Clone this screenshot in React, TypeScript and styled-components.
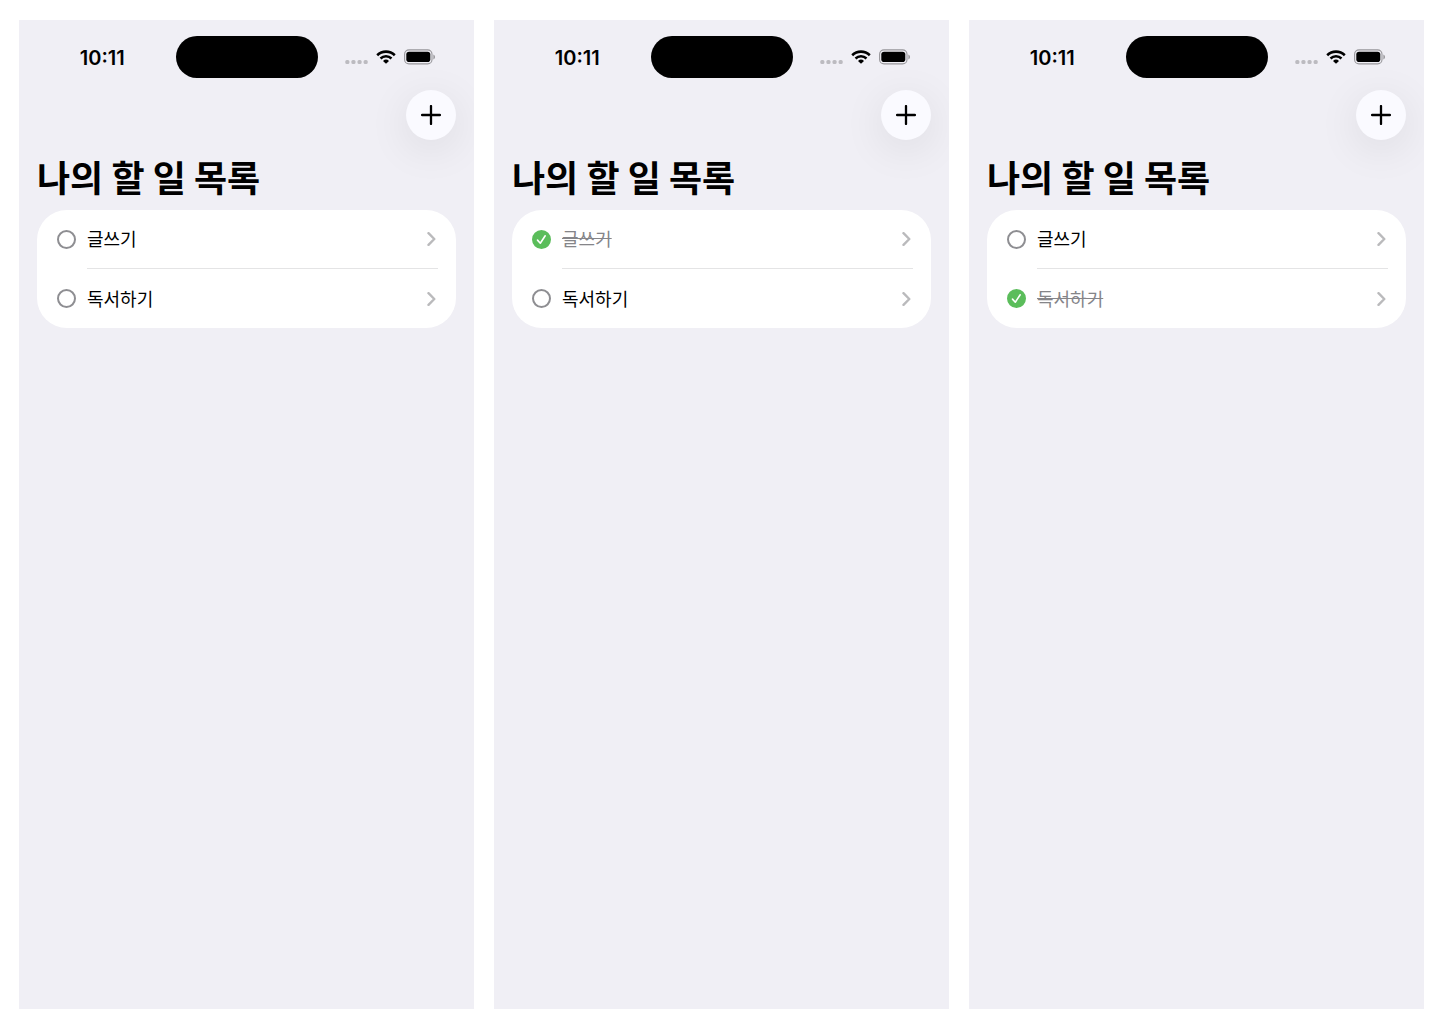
import React, { useId, useState } from "react";
import styled, { createGlobalStyle } from "styled-components";

const GlobalStyle = createGlobalStyle`
  *, *::before, *::after { box-sizing: border-box; }
  body {
    margin: 0;
    background: #fff;
    color: #000;
    font-family: Inter, "Noto Sans CJK KR", sans-serif;
  }
`;

const Gallery = styled.main`
  display: grid;
  grid-template-columns: repeat(3, minmax(0, 1fr));
  gap: 20px;
  min-height: 100vh;
  padding: 20px 22px 21px 19px;
`;

const Phone = styled.section`
  display: flex;
  flex-direction: column;
  overflow: hidden;
  padding: 16px 18px;
  background: #f0eff5;
`;

const StatusBar = styled.div`
  display: grid;
  grid-template-columns: 1fr 142px 1fr;
  align-items: center;
`;

const Clock = styled.time`
  justify-self: center;
  padding: 2px 8px 0 0;
  font-size: 20px;
  font-weight: 600;
  line-height: 24px;
`;

const Island = styled.div`
  height: 42px;
  border-radius: 21px;
  background: #000;
`;

const Indicators = styled.div`
  display: flex;
  align-items: center;
  justify-content: flex-end;
  gap: 8px;
  padding-right: 20px;
`;

const Toolbar = styled.div`
  display: flex;
  justify-content: flex-end;
  padding-top: 12px;
`;

const AddButton = styled.button`
  display: grid;
  place-items: center;
  width: 50px;
  height: 50px;
  padding: 0;
  border: 0;
  border-radius: 50%;
  background: #fafaff;
  color: #000;
  box-shadow: 0 9px 44px rgba(0, 0, 0, 0.09);
  cursor: pointer;
`;

const Title = styled.h1`
  margin: 14px 0 12px;
  font-family: "Noto Sans CJK KR", sans-serif;
  font-size: 36px;
  font-weight: 700;
  line-height: 44px;
`;

const List = styled.ul`
  margin: 0;
  padding: 0 18px 0 20px;
  border-radius: 30px;
  background: #fff;
  list-style: none;
`;

const Row = styled.li`
  display: flex;
  gap: 11px;
`;

const CheckCell = styled.span`
  display: grid;
  align-content: center;
  width: 19px;

  > * { grid-area: 1 / 1; }
`;

const Check = styled.input`
  appearance: none;
  width: 19px;
  height: 19px;
  margin: 0;
  border: 2px solid #8e8e92;
  border-radius: 50%;
  cursor: pointer;

  &:checked {
    border-color: #5bbd5b;
    background: #5bbd5b;
  }
`;

const Tick = styled.svg`
  pointer-events: none;
`;

const RowBody = styled.div`
  display: flex;
  flex: 1;
  align-items: center;
  justify-content: space-between;
  height: 59px;

  ${Row}:not(:last-child) & {
    border-bottom: 1px solid #e4e4e5;
  }
`;

const TaskLabel = styled.label<{ $done: boolean }>`
  padding-bottom: 2px;
  font-family: "Noto Sans CJK KR", sans-serif;
  font-size: 18px;
  line-height: 26px;
  color: ${(p) => (p.$done ? "#858589" : "#000")};
  text-decoration: ${(p) => (p.$done ? "line-through" : "none")};
  cursor: pointer;
`;

const OpenButton = styled.button`
  display: grid;
  place-items: center;
  padding: 8px 2px;
  border: 0;
  background: none;
  color: #bababc;
  cursor: pointer;
`;

const TASKS = ["글쓰기", "독서하기"];

function SignalDots() {
  return (
    <svg width="23" height="14" viewBox="0 0 23 14" fill="#bcbbc0" aria-hidden="true">
      {[2.3, 8.4, 14.5, 20.6].map((x) => (
        <rect key={x} x={x - 2} y="10" width="4.1" height="4" rx="1.5" />
      ))}
    </svg>
  );
}

function WifiIcon() {
  return (
    <svg width="20" height="14" viewBox="0 0 20 14" fill="none" stroke="#000" aria-hidden="true">
      <path d="M1.2 5.2a12.7 12.7 0 0 1 17.6 0" strokeWidth="2.6" />
      <path d="M4.5 8.5a8 8 0 0 1 11 0" strokeWidth="2.5" />
      <path d="M10 13.8 7 10.9a4.3 4.3 0 0 1 6 0Z" fill="#000" stroke="none" />
    </svg>
  );
}

function BatteryIcon() {
  return (
    <svg width="32" height="16" viewBox="0 0 32 16" aria-hidden="true">
      <rect x="0.6" y="0.9" width="27.4" height="14" rx="4.4" fill="none" stroke="#97969a" strokeWidth="1.1" />
      <rect x="2.3" y="2.7" width="24" height="10.4" rx="2.8" fill="#000" />
      <path d="M29.4 5.4c1 .4 1.6 1.3 1.6 2.5s-.6 2.1-1.6 2.5Z" fill="#97969a" />
    </svg>
  );
}

function TaskRow({ name, initiallyDone }: { name: string; initiallyDone: boolean }) {
  const id = useId();
  const [done, setDone] = useState(initiallyDone);
  return (
    <Row>
      <CheckCell>
        <Check id={id} type="checkbox" checked={done} onChange={() => setDone(!done)} />
        {done && (
          <Tick width="19" height="19" viewBox="0 0 19 19" aria-hidden="true">
            <path
              d="M5.5 10.1 8.3 13.2 13.2 5.8"
              fill="none"
              stroke="#fff"
              strokeWidth="1.6"
              strokeLinecap="round"
              strokeLinejoin="round"
            />
          </Tick>
        )}
      </CheckCell>
      <RowBody>
        <TaskLabel htmlFor={id} $done={done}>{name}</TaskLabel>
        <OpenButton type="button" aria-label={name}>
          <svg width="9" height="14" viewBox="0 0 9 14" aria-hidden="true">
            <path
              d="M1.5 1.2 7.3 7 1.5 12.8"
              fill="none"
              stroke="currentColor"
              strokeWidth="2.4"
              strokeLinecap="round"
              strokeLinejoin="round"
            />
          </svg>
        </OpenButton>
      </RowBody>
    </Row>
  );
}

function TodoScreen({ doneTask }: { doneTask?: string }) {
  return (
    <Phone>
      <StatusBar>
        <Clock>10:11</Clock>
        <Island />
        <Indicators>
          <SignalDots />
          <WifiIcon />
          <BatteryIcon />
        </Indicators>
      </StatusBar>
      <Toolbar>
        <AddButton type="button" aria-label="+">
          <svg width="20" height="20" viewBox="0 0 20 20" aria-hidden="true">
            <path d="M10 1.1v17.8M1.1 10h17.8" stroke="currentColor" strokeWidth="2.3" strokeLinecap="round" />
          </svg>
        </AddButton>
      </Toolbar>
      <Title>나의 할 일 목록</Title>
      <List>
        {TASKS.map((name) => (
          <TaskRow key={name} name={name} initiallyDone={name === doneTask} />
        ))}
      </List>
    </Phone>
  );
}

export default function App() {
  return (
    <>
      <GlobalStyle />
      <Gallery>
        <TodoScreen />
        <TodoScreen doneTask="글쓰기" />
        <TodoScreen doneTask="독서하기" />
      </Gallery>
    </>
  );
}
